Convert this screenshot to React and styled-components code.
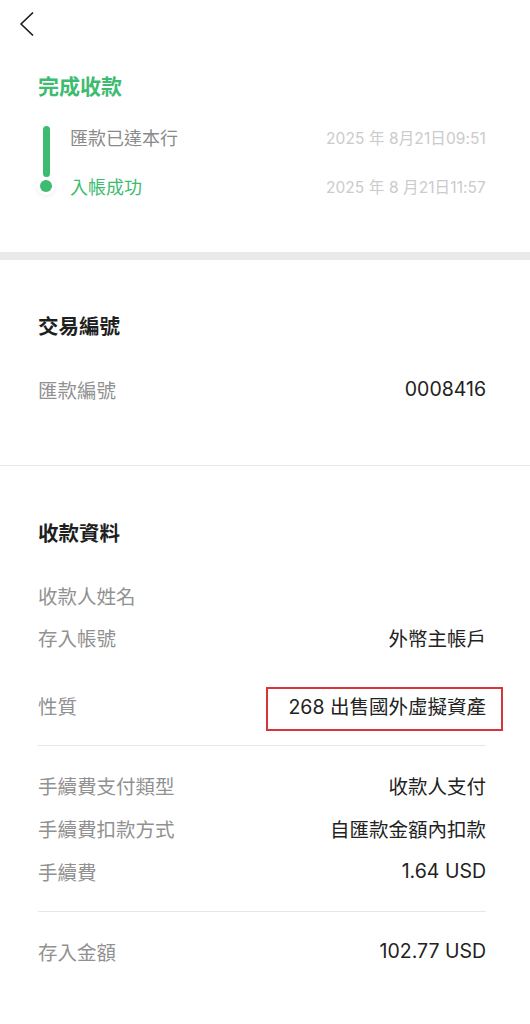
import React from "react";
import styled, { createGlobalStyle } from "styled-components";

const Global = createGlobalStyle`
  html, body {
    margin: 0;
    padding: 0;
    background: #fff;
  }
  body {
    font-family: "Inter", "Noto Sans CJK TC", sans-serif;
    -webkit-font-smoothing: antialiased;
  }
`;

const Page = styled.div`
  width: 530px;
  min-height: 1024px;
  background: #fff;
  overflow: hidden;
`;

const NavBar = styled.div`
  height: 48px;
  display: flex;
  align-items: flex-start;
  padding: 12px 0 0 19px;
  box-sizing: border-box;
`;

const BackButton = styled.button`
  border: 0;
  background: none;
  padding: 0;
  width: 16px;
  height: 24px;
  display: block;
  cursor: pointer;
`;

const StatusSection = styled.section`
  padding: 25px 44px 55px 38px;
`;

const StatusTitle = styled.h1`
  margin: 0;
  font-size: 21px;
  line-height: 28px;
  font-weight: 700;
  color: #3dbb70;
`;

const Timeline = styled.div`
  display: flex;
  margin-top: 25px;
`;

const Track = styled.div`
  width: 16px;
  display: flex;
  flex-direction: column;
  align-items: center;
  margin-right: 16px;
`;

const Bar = styled.div`
  width: 7px;
  height: 51px;
  border-radius: 4px;
  background: #3dbb70;
`;

const Dot = styled.div`
  width: 12px;
  height: 12px;
  margin-top: 3px;
  border-radius: 50%;
  background: #3dbb70;
  box-shadow: 0 0 0 3px #fff, 0 1px 5px 3px rgba(0, 0, 0, 0.08);
`;

const Steps = styled.div`
  flex: 1;
  display: flex;
  flex-direction: column;
  gap: 27px;
`;

const Step = styled.div`
  display: flex;
  justify-content: space-between;
  align-items: center;
  height: 22px;
`;

const StepName = styled.span`
  font-size: 18px;
  color: ${(p) => (p.$active ? "#3dbb70" : "#8a8a8a")};
`;

const StepTime = styled.span`
  font-size: 15.5px;
  color: #cbcbcb;
  letter-spacing: 0.1px;
`;

const GrayBand = styled.div`
  height: 8px;
  background: #e9e9e9;
`;

const InfoSection = styled.section`
  padding: ${(p) => p.$top}px 44px ${(p) => p.$bottom}px 38px;
  border-bottom: ${(p) => (p.$divider ? "1px solid #e6e6e6" : "0")};
`;

const SectionTitle = styled.h2`
  margin: 0;
  font-size: 20.5px;
  line-height: 28px;
  font-weight: 700;
  color: #1f1f1f;
`;

const Row = styled.div`
  display: flex;
  justify-content: space-between;
  align-items: center;
  height: 28px;
  margin-top: ${(p) => p.$gap}px;
`;

const Label = styled.span`
  font-size: 19.5px;
  color: #919191;
`;

const Value = styled.span`
  position: relative;
  font-size: 19.5px;
  color: #222;
`;

const Marked = styled(Value)`
  &::after {
    content: "";
    position: absolute;
    left: -22px;
    right: -17px;
    top: -4px;
    bottom: -11px;
    border: 2px solid #d8343c;
  }
`;

const Rule = styled.div`
  height: 1px;
  background: #e6e6e6;
  margin-top: ${(p) => p.$gap}px;
`;

function Chevron() {
  return (
    <svg width="16" height="24" viewBox="0 0 16 24" fill="none">
      <path d="M13.5 1 L2 12 L13.5 23" stroke="#1c1c1c" strokeWidth="1.7" strokeLinecap="round" strokeLinejoin="round" />
    </svg>
  );
}

export default function App() {
  return (
    <Page>
      <Global />
      <NavBar>
        <BackButton aria-label="返回">
          <Chevron />
        </BackButton>
      </NavBar>

      <StatusSection>
        <StatusTitle>完成收款</StatusTitle>
        <Timeline>
          <Track>
            <Bar />
            <Dot />
          </Track>
          <Steps>
            <Step>
              <StepName>匯款已達本行</StepName>
              <StepTime>2025 年 8月21日09:51</StepTime>
            </Step>
            <Step>
              <StepName $active>入帳成功</StepName>
              <StepTime>2025 年 8 月21日11:57</StepTime>
            </Step>
          </Steps>
        </Timeline>
      </StatusSection>

      <GrayBand />

      <InfoSection $top={53} $bottom={62} $divider>
        <SectionTitle>交易編號</SectionTitle>
        <Row $gap={34}>
          <Label>匯款編號</Label>
          <Value>0008416</Value>
        </Row>
      </InfoSection>

      <InfoSection $top={54} $bottom={60}>
        <SectionTitle>收款資料</SectionTitle>
        <Row $gap={33}>
          <Label>收款人姓名</Label>
        </Row>
        <Row $gap={14}>
          <Label>存入帳號</Label>
          <Value>外幣主帳戶</Value>
        </Row>
        <Row $gap={40}>
          <Label>性質</Label>
          <Marked>268 出售國外虛擬資產</Marked>
        </Row>
        <Rule $gap={26} />
        <Row $gap={25}>
          <Label>手續費支付類型</Label>
          <Value>收款人支付</Value>
        </Row>
        <Row $gap={15}>
          <Label>手續費扣款方式</Label>
          <Value>自匯款金額內扣款</Value>
        </Row>
        <Row $gap={15}>
          <Label>手續費</Label>
          <Value>1.64 USD</Value>
        </Row>
        <Rule $gap={26} />
        <Row $gap={25}>
          <Label>存入金額</Label>
          <Value>102.77 USD</Value>
        </Row>
      </InfoSection>
    </Page>
  );
}
